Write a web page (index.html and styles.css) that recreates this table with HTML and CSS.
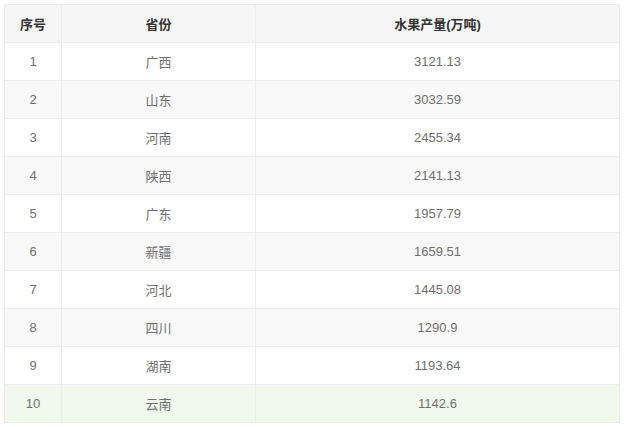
FILE: index.html
```html
<!DOCTYPE html>
<html lang="zh">
<head>
<meta charset="utf-8">
<link rel="stylesheet" href="styles.css">
</head>
<body>
<table class="tbl">
<colgroup><col class="c1"><col class="c2"><col class="c3"></colgroup>
<thead>
<tr><th>序号</th><th>省份</th><th>水果产量(万吨)</th></tr>
</thead>
<tbody>
<tr><td>1</td><td>广西</td><td>3121.13</td></tr>
<tr><td>2</td><td>山东</td><td>3032.59</td></tr>
<tr><td>3</td><td>河南</td><td>2455.34</td></tr>
<tr><td>4</td><td>陕西</td><td>2141.13</td></tr>
<tr><td>5</td><td>广东</td><td>1957.79</td></tr>
<tr><td>6</td><td>新疆</td><td>1659.51</td></tr>
<tr><td>7</td><td>河北</td><td>1445.08</td></tr>
<tr><td>8</td><td>四川</td><td>1290.9</td></tr>
<tr><td>9</td><td>湖南</td><td>1193.64</td></tr>
<tr class="hl"><td>10</td><td>云南</td><td>1142.6</td></tr>
</tbody>
</table>
</body>
</html>
```
FILE: styles.css
```css
html, body { margin: 0; padding: 0; background: #fff; }
body { padding: 4px 0 0 4px; font-family: "Liberation Sans", "Noto Sans CJK SC", sans-serif; }
.tbl { border-collapse: collapse; width: 615px; table-layout: fixed; }
.c1 { width: 57px; }
.c2 { width: 194px; }
.c3 { width: 364px; }
.tbl th, .tbl td { border: 1px solid #ececec; text-align: center; height: 38px; padding: 0; box-sizing: border-box; }
.tbl th { background: #f6f6f6; color: #333; font-weight: bold; font-size: 13px; }
.tbl td { color: #707070; font-size: 13px; }
.tbl tbody tr:nth-child(even) td { background: #f9f9f9; }
.tbl tbody tr.hl td { background: #f1f9ec; }
```
